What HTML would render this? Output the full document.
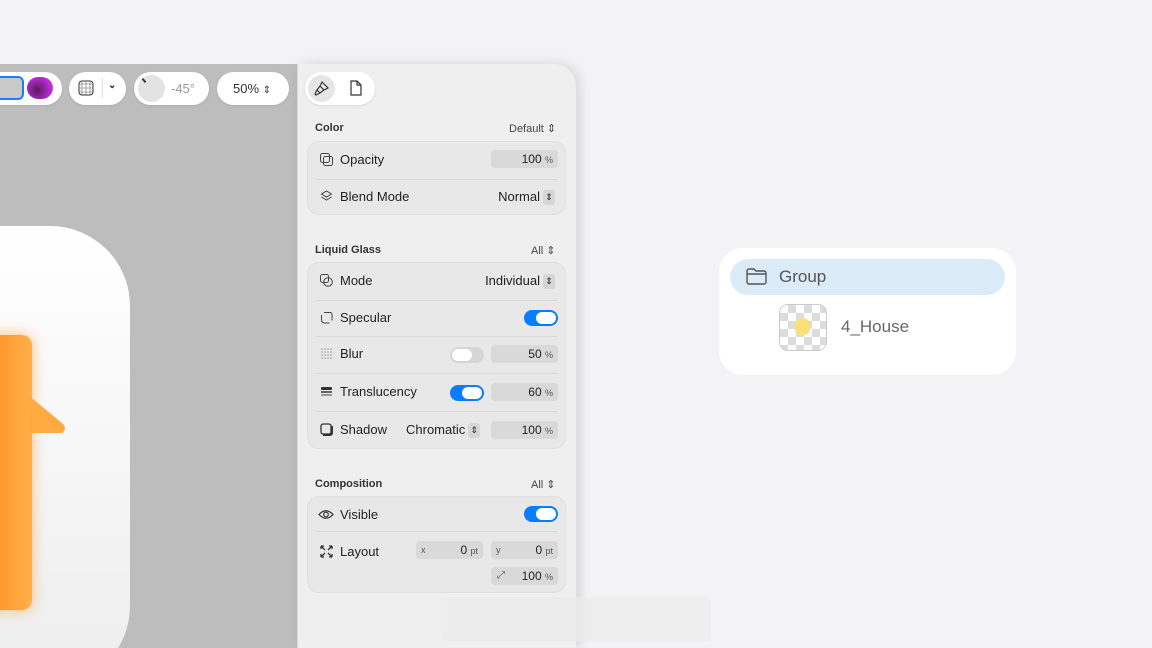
<!DOCTYPE html>
<html><head><meta charset="utf-8"><style>
*{box-sizing:border-box;margin:0;padding:0}
html,body{width:1152px;height:648px;overflow:hidden}
body{background:#f3f3f5;font-family:"Liberation Sans",sans-serif;position:relative;color:#222}
.abs{position:absolute}
.clip{position:absolute;left:0;top:0;width:1152px;height:648px;overflow:hidden}
.canvas{left:0;top:64px;width:297px;height:584px;background:#bdbdbd;overflow:hidden}
.panel{left:297px;top:64px;width:279px;height:584px;background:#efefef;border-top-right-radius:22px;box-shadow:4px 0 12px rgba(0,0,0,.12);border-left:1px solid #d6d6d6}
.pill{background:#fff;border-radius:17px;height:33px;top:72px;box-shadow:0 1px 3px rgba(0,0,0,.08)}
.sec{font-size:11px;color:#333;font-weight:bold}
.secr{font-size:11px;color:#444}
.card{left:307px;width:259px;background:#e8e8e8;border-radius:12px;border:1px solid #e0e0e0}
.row{position:absolute;left:0;width:100%;height:37px;font-size:13px}
.row .lbl{position:absolute;left:32px;top:10px}
.row .ic{position:absolute;left:12px;top:11px;width:13px;height:13px}
.sep{position:absolute;left:8px;right:8px;height:1px;background:#d9d9d9}
.fld{position:absolute;background:#d9d9d9;border-radius:4px;height:18px;font-size:12px;text-align:right;padding-right:5px;line-height:18px}
.fld small{font-size:9px;color:#555}
.tog{position:absolute;width:34px;height:16px;border-radius:8px;background:#0a7cff}
.tog::after{content:"";position:absolute;right:2px;top:2px;width:20px;height:12px;border-radius:6px;background:#fff}
.tog.off{background:#d6d6d6}
.tog.off::after{left:2px;right:auto}
.step{display:inline-block;width:12px;height:15px;background:#d6d6d6;border-radius:3px;font-size:9px;text-align:center;line-height:15px;vertical-align:middle;margin-left:3px}
</style></head><body><div class="clip">
<div class="abs canvas">
 <div class="abs" style="left:-80px;top:162px;width:210px;height:460px;background:linear-gradient(#fff,#ededed);border-radius:80px"></div>
 <div class="abs" style="left:-20px;top:271px;width:52px;height:275px;background:linear-gradient(90deg,#ff8a1e,#ffb04a);border-radius:10px;box-shadow:0 0 14px rgba(255,150,40,.6)"></div>
 <svg class="abs" style="left:28px;top:331px" width="42" height="48"><path d="M0 0 L34 28 Q40 34 34 38 L0 38Z" fill="#ffaa40"/></svg>
</div>

<div class="abs pill" style="left:-20px;width:82px"></div>
<div class="abs" style="left:-6px;top:76px;width:30px;height:24px;border:2px solid #1a7fff;border-radius:6px;background:#c9c9c9"></div>
<div class="abs" style="left:27px;top:77px;width:26px;height:22px;border-radius:11px;background:radial-gradient(circle at 40% 60%,#5a1a5a,#b02ad0 60%,#e04fb0)"></div>
<div class="abs pill" style="left:69px;width:57px"></div>
<svg class="abs" style="left:78px;top:80px" width="16" height="16"><rect x="1" y="1" width="14" height="14" rx="3" fill="none" stroke="#333"/><path d="M4 4h8v8H4zM1 8h14M8 1v14M4 1v14M12 1v14M1 4h14M1 12h14" stroke="#666" stroke-width=".6" fill="none"/></svg>
<div class="abs" style="left:102px;top:78px;width:1px;height:20px;background:#ddd"></div>
<div class="abs" style="left:108px;top:80px;font-size:10px;font-weight:bold">⌄</div>
<div class="abs pill" style="left:134px;width:75px"></div>
<div class="abs" style="left:138px;top:75px;width:27px;height:27px;border-radius:50%;background:#e3e3e3"></div>
<div class="abs" style="left:143px;top:78px;width:2px;height:5px;background:#333;transform:rotate(-40deg)"></div>
<div class="abs" style="left:171px;top:81px;font-size:13px;color:#999">-45°</div>
<div class="abs pill" style="left:217px;width:72px"></div>
<div class="abs" style="left:233px;top:81px;font-size:13px;color:#333">50% <span style="font-size:10px">⇕</span></div>

<div class="abs panel"></div>
<div class="abs pill" style="left:305px;width:70px"></div>
<div class="abs" style="left:308px;top:75px;width:27px;height:27px;border-radius:50%;background:#e6e6e6"></div>
<svg class="abs" style="left:313px;top:79px" width="18" height="18" fill="none" stroke="#333" stroke-width="1.2"><path d="M9 3l6 6-4 2-4-4zM7 7l-3 4 3 3 4-3M4 11l-2 4 1 1 4-2"/></svg>
<svg class="abs" style="left:349px;top:80px" width="14" height="17" fill="none" stroke="#333" stroke-width="1.2"><path d="M2 1h6l4 4v10H2zM8 1v4h4"/></svg>

<div class="abs sec" style="left:315px;top:122px">Color</div>
<div class="abs secr" style="left:509px;top:122px">Default ⇕</div>
<div class="abs card" style="top:141px;height:74px">
 <div class="row" style="top:0"><svg class="ic" viewBox="0 0 13 13" fill="none" stroke="#444"><rect x=".5" y=".5" width="9" height="9" rx="2"/><rect x="3.5" y="3.5" width="9" height="9" rx="2"/></svg><span class="lbl">Opacity</span><div class="fld" style="left:183px;top:8px;width:67px">100 <small>%</small></div></div>
 <div class="sep" style="top:37px"></div>
 <div class="row" style="top:37px"><svg class="ic" viewBox="0 0 13 13" fill="none" stroke="#444"><path d="M6.5 1l5 3-5 3-5-3zM1.5 7l5 3 5-3"/></svg><span class="lbl">Blend Mode</span><span style="position:absolute;right:10px;top:10px">Normal<span class="step">⇕</span></span></div>
</div>

<div class="abs sec" style="left:315px;top:244px">Liquid Glass</div>
<div class="abs secr" style="left:531px;top:244px">All ⇕</div>
<div class="abs card" style="top:262px;height:187px">
 <div class="row" style="top:0"><svg class="ic" viewBox="0 0 13 13" fill="none" stroke="#444"><rect x=".5" y=".5" width="8" height="8" rx="2"/><circle cx="8" cy="8" r="4.3"/></svg><span class="lbl">Mode</span><span style="position:absolute;right:10px;top:10px">Individual<span class="step">⇕</span></span></div>
 <div class="sep" style="top:37px"></div>
 <div class="row" style="top:37px"><svg class="ic" viewBox="0 0 13 13" fill="none" stroke="#444"><path d="M4 1.5h6a2 2 0 012 2v6M1.5 4v5a3 3 0 003 3h5"/></svg><span class="lbl">Specular</span><div class="tog" style="left:216px;top:10px"></div></div>
 <div class="sep" style="top:73px"></div>
 <div class="row" style="top:73px"><svg class="ic" viewBox="0 0 13 13"><g fill="#999"><circle cx="2" cy="2" r=".8"/><circle cx="5" cy="2" r=".8"/><circle cx="8" cy="2" r=".8"/><circle cx="11" cy="2" r=".8"/><circle cx="2" cy="5" r=".8"/><circle cx="5" cy="5" r=".8"/><circle cx="8" cy="5" r=".8"/><circle cx="11" cy="5" r=".8"/><circle cx="2" cy="8" r=".8"/><circle cx="5" cy="8" r=".8"/><circle cx="8" cy="8" r=".8"/><circle cx="11" cy="8" r=".8"/><circle cx="2" cy="11" r=".8"/><circle cx="5" cy="11" r=".8"/><circle cx="8" cy="11" r=".8"/><circle cx="11" cy="11" r=".8"/></g></svg><span class="lbl">Blur</span><div class="tog off" style="left:142px;top:11px"></div><div class="fld" style="left:183px;top:9px;width:67px">50 <small>%</small></div></div>
 <div class="sep" style="top:110px"></div>
 <div class="row" style="top:111px"><svg class="ic" viewBox="0 0 13 13"><rect x="1" y="2" width="11" height="3" rx="1" fill="#333"/><rect x="1" y="6" width="11" height="2" fill="#666"/><rect x="1" y="9" width="11" height="2" fill="#999"/></svg><span class="lbl">Translucency</span><div class="tog" style="left:142px;top:11px"></div><div class="fld" style="left:183px;top:9px;width:67px">60 <small>%</small></div></div>
 <div class="sep" style="top:148px"></div>
 <div class="row" style="top:149px"><svg class="ic" viewBox="0 0 13 13" fill="none" stroke="#333" stroke-width="1.3"><rect x="1" y="1" width="10" height="10" rx="2"/><path d="M3 12h7a2 2 0 002-2V3" stroke-width="2"/></svg><span class="lbl">Shadow</span><span style="position:absolute;left:98px;top:10px">Chromatic<span class="step">⇕</span></span><div class="fld" style="left:183px;top:9px;width:67px">100 <small>%</small></div></div>
</div>

<div class="abs sec" style="left:315px;top:478px">Composition</div>
<div class="abs secr" style="left:531px;top:478px">All ⇕</div>
<div class="abs card" style="top:496px;height:97px">
 <div class="row" style="top:0"><svg class="ic" style="left:10px;width:16px" viewBox="0 0 16 13" fill="none" stroke="#333" stroke-width="1.2"><path d="M1 6.5Q8 -1 15 6.5Q8 14 1 6.5z"/><circle cx="8" cy="6.5" r="2.3"/></svg><span class="lbl">Visible</span><div class="tog" style="left:216px;top:9px"></div></div>
 <div class="sep" style="top:34px"></div>
 <div class="row" style="top:37px"><svg class="ic" viewBox="0 0 13 13" fill="none" stroke="#333" stroke-width="1.3"><path d="M1 1l4 4M12 1L8 5M1 12l4-4M12 12L8 8M1 1h3M1 1v3M12 1h-3M12 1v3M1 12h3M1 12v-3M12 12h-3M12 12v-3"/></svg><span class="lbl">Layout</span>
  <div class="fld" style="left:108px;top:7px;width:67px"><span style="position:absolute;left:5px;font-size:9px;color:#555">x</span>0 <small>pt</small></div>
  <div class="fld" style="left:183px;top:7px;width:67px"><span style="position:absolute;left:5px;font-size:9px;color:#555">y</span>0 <small>pt</small></div>
  <div class="fld" style="left:183px;top:33px;width:67px"><span style="position:absolute;left:6px;font-size:10px;color:#555">⤢</span>100 <small>%</small></div>
 </div>
</div>
<div class="abs" style="left:441px;top:597px;width:270px;height:44px;background:#ebebeb;border-radius:6px;opacity:.7"></div>

<div class="abs" style="left:719px;top:248px;width:297px;height:127px;background:#fff;border-radius:24px"></div>
<div class="abs" style="left:730px;top:259px;width:275px;height:36px;background:#dcebf8;border-radius:18px"></div>
<svg class="abs" style="left:746px;top:268px" width="21" height="17" fill="none" stroke="#555" stroke-width="1.4"><path d="M1 3a2 2 0 012-2h5l2 2h8a2 2 0 012 2v9a2 2 0 01-2 2H3a2 2 0 01-2-2zM1 6h19"/></svg>
<div class="abs" style="left:779px;top:267px;font-size:17px;color:#555">Group</div>
<div class="abs" style="left:779px;top:304px;width:48px;height:47px;border-radius:9px;border:1px solid #ccc;background-color:#fff;background-image:linear-gradient(45deg,#dcdcdc 25%,transparent 25%,transparent 75%,#dcdcdc 75%),linear-gradient(45deg,#dcdcdc 25%,transparent 25%,transparent 75%,#dcdcdc 75%);background-size:16px 16px;background-position:0 0,8px 8px"></div>
<div class="abs" style="left:795px;top:318px;width:15px;height:17px;border-radius:7px 7px 6px 6px;background:#fbe07a"></div>
<div class="abs" style="left:841px;top:317px;font-size:17px;color:#666">4_House</div>
</div></body></html>
